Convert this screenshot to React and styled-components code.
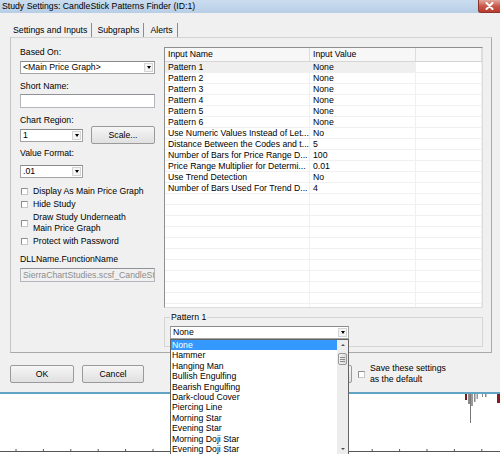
import React from 'react';
import styled, { createGlobalStyle } from 'styled-components';

const GlobalStyle = createGlobalStyle`
  html, body {
    margin: 0;
    padding: 0;
    background: #ffffff;
  }
  body {
    font-family: "Liberation Sans", Arial, sans-serif;
    font-size: 8.7px;
    color: #000;
  }
`;

const inputs = [
  ['Pattern 1', 'None'],
  ['Pattern 2', 'None'],
  ['Pattern 3', 'None'],
  ['Pattern 4', 'None'],
  ['Pattern 5', 'None'],
  ['Pattern 6', 'None'],
  ['Use Numeric Values Instead of Let...', 'No'],
  ['Distance Between the Codes and t...', '5'],
  ['Number of Bars for Price Range D...', '100'],
  ['Price Range Multiplier for Determi...', '0.01'],
  ['Use Trend Detection', 'No'],
  ['Number of Bars Used For Trend D...', '4'],
];

const patterns = [
  'None',
  'Hammer',
  'Hanging Man',
  'Bullish Engulfing',
  'Bearish Engulfing',
  'Dark-cloud Cover',
  'Piercing Line',
  'Morning Star',
  'Evening Star',
  'Morning Doji Star',
  'Evening Doji Star',
];

const Screen = styled.div`
  width: 500px;
  height: 454px;
  overflow: hidden;
  display: flex;
  flex-direction: column;
  background: #fff;
`;

const Dialog = styled.div`
  background: #f0f0f0;
  border-bottom: 2px solid #62a4c4;
  position: relative;
  z-index: 2;
`;

const TitleBar = styled.div`
  height: 13px;
  display: flex;
  align-items: center;
  justify-content: space-between;
  background: linear-gradient(#cadcef, #b8cee6);
`;

const Title = styled.span`
  padding-left: 2px;
  line-height: 13px;
  white-space: nowrap;
`;

const CloseButton = styled.div`
  width: 22px;
  height: 13px;
  align-self: flex-start;
  display: flex;
  align-items: center;
  justify-content: center;
  background: linear-gradient(#e2a79c, #c9594c 50%, #b83b2e);
  border: 1px solid #8e3329;
  border-top: none;
  border-right: none;
  border-radius: 0 0 0 3px;
  box-sizing: border-box;
`;

const DialogBody = styled.div`
  padding: 9px 8px 9px 10px;
`;

const TabStrip = styled.div`
  display: flex;
  align-items: flex-end;
  height: 15px;
`;

const Tab = styled.div`
  height: 14px;
  line-height: 14px;
  padding: 0 4px 0 3px;
  border-right: 1px solid #8c8c8c;
  margin-right: ${(p) => (p.$active ? '2px' : '3px')};
  white-space: nowrap;
`;

const TabPanel = styled.div`
  height: 316px;
  box-sizing: border-box;
  border: 1px solid #a9a9a9;
  border-top-color: #d4d4d4;
  border-left-color: #c4c4c4;
  padding: 9px 8px 5px 9px;
  display: grid;
  grid-template-columns: 135px 319px;
  column-gap: 9px;
`;

const LeftColumn = styled.div`
  display: flex;
  flex-direction: column;
`;

const Label = styled.div`
  line-height: 11px;
  height: 11px;
  margin-top: ${(p) => p.$gap || 0}px;
  white-space: nowrap;
`;

const Combo = styled.div`
  position: relative;
  width: ${(p) => p.$width}px;
  height: 13px;
  box-sizing: border-box;
  margin-top: ${(p) => p.$gap || 0}px;
  background: #fff;
  border: 1px solid #a3a3a3;
  border-top-color: #8a8a8a;
  display: flex;
  align-items: center;
  justify-content: space-between;
  padding-left: 2px;
`;

const ComboText = styled.span`
  line-height: 11px;
  white-space: nowrap;
`;

const ComboArrow = styled.span`
  width: 9px;
  height: 9px;
  margin-right: 1px;
  box-sizing: border-box;
  border: 1px solid #d4d4d4;
  background: #f4f4f4;
  display: flex;
  align-items: center;
  justify-content: center;
  &::after {
    content: '';
    border-left: 2.5px solid transparent;
    border-right: 2.5px solid transparent;
    border-top: 3px solid #000;
  }
`;

const TextBox = styled.div`
  height: 14px;
  box-sizing: border-box;
  margin-top: ${(p) => p.$gap || 0}px;
  border: 1px solid #b4b6bc;
  border-top-color: #8e9197;
  background: ${(p) => (p.$disabled ? '#f0f0f0' : '#fff')};
  color: #8d8d8d;
  line-height: 12px;
  padding-left: 2px;
  white-space: nowrap;
  overflow: hidden;
`;

const RegionRow = styled.div`
  display: flex;
  align-items: center;
  justify-content: space-between;
  height: 18px;
`;

const Button = styled.div`
  width: ${(p) => p.$width}px;
  height: 18px;
  box-sizing: border-box;
  margin-left: ${(p) => p.$gap || 0}px;
  border: 1px solid #9a9a9a;
  border-radius: 2px;
  background: linear-gradient(#f6f6f6, #ebebeb 50%, #e0e0e0);
  display: flex;
  align-items: center;
  justify-content: center;
  flex-shrink: 0;
`;

const CheckList = styled.div`
  display: flex;
  flex-direction: column;
  gap: 2px;
  margin-top: 8px;
`;

const CheckRow = styled.div`
  display: flex;
  align-items: center;
  gap: 5px;
  padding-left: 1px;
  margin-left: ${(p) => p.$gap || 0}px;
  line-height: 11px;
`;

const CheckBox = styled.span`
  width: 7px;
  height: 7px;
  box-sizing: border-box;
  border: 1px solid #8e8f8f;
  border-right-color: #c7c7c7;
  border-bottom-color: #c7c7c7;
  background: #fff;
  flex-shrink: 0;
`;

const RightColumn = styled.div`
  display: flex;
  flex-direction: column;
`;

const InputsTable = styled.div`
  height: 261px;
  box-sizing: border-box;
  border: 1px solid #dcdcdc;
  border-top-color: #8f8f8f;
  border-left-color: #8f8f8f;
  background: #fff;
  overflow: hidden;
`;

const HeaderRow = styled.div`
  display: grid;
  grid-template-columns: 145px 106px 1fr;
  height: 13px;
  background: #f7f7f7;
  border-bottom: 1px solid #d6d6d6;
`;

const HeaderCell = styled.div`
  line-height: 13px;
  padding-left: 3px;
  border-right: 1px solid #dcdcdc;
`;

const Row = styled.div`
  display: grid;
  grid-template-columns: 145px 106px 1fr;
  height: 11px;
  box-sizing: border-box;
  border-bottom: 1px solid #f0f0f0;
`;

const Cell = styled.div`
  line-height: 10px;
  padding-left: 3px;
  white-space: nowrap;
  overflow: hidden;
  border-right: 1px solid #f0f0f0;
  background: ${(p) => (p.$selected ? '#efefef' : 'transparent')};
`;

const GroupBox = styled.fieldset`
  margin: 4px 0 0;
  padding: 4px 5px 7px;
  border: 1px solid #d5d5d5;
  min-width: 0;
`;

const GroupLegend = styled.legend`
  padding: 0 1px;
  line-height: 10px;
`;

const ComboHolder = styled.div`
  position: relative;
  width: 179px;
`;

const DropList = styled.div`
  position: absolute;
  top: 100%;
  left: 0;
  width: 179px;
  height: 116px;
  box-sizing: border-box;
  border: 1px solid #646464;
  background: #fff;
  display: flex;
  z-index: 10;
`;

const DropItems = styled.div`
  flex: 1;
  overflow: hidden;
`;

const DropItem = styled.div`
  line-height: 10.4px;
  height: 10.4px;
  padding-left: 1px;
  white-space: nowrap;
  background: ${(p) => (p.$active ? '#3399ff' : 'transparent')};
  color: ${(p) => (p.$active ? '#fff' : '#000')};
`;

const ScrollBar = styled.div`
  width: 11px;
  background: #ededed;
  display: flex;
  flex-direction: column;
  justify-content: space-between;
  position: relative;
`;

const ScrollArrow = styled.div`
  height: 10px;
  display: flex;
  align-items: center;
  justify-content: center;
  &::after {
    content: '';
    border-left: 2px solid transparent;
    border-right: 2px solid transparent;
    ${(p) => (p.$up ? 'border-bottom: 2.5px solid #505050;' : 'border-top: 2.5px solid #505050;')}
  }
`;

const ScrollThumb = styled.div`
  position: absolute;
  top: 13px;
  left: 1px;
  width: 9px;
  height: 12px;
  box-sizing: border-box;
  border: 1px solid #9a9a9a;
  border-radius: 2px;
  background: linear-gradient(90deg, #f2f2f2, #dadada);
  display: flex;
  flex-direction: column;
  align-items: center;
  justify-content: center;
  gap: 1px;
  span {
    width: 5px;
    height: 1px;
    background: #8a8a8a;
  }
`;

const ButtonRow = styled.div`
  display: flex;
  align-items: center;
  height: 18px;
  margin-top: 12px;
`;

const SaveText = styled.div`
  line-height: 11px;
`;

const Chart = styled.div`
  flex: 1;
  background: #fff;
  position: relative;
  z-index: 1;
`;

function CloseIcon() {
  return (
    <svg width="9" height="8" viewBox="0 0 9 8">
      <path d="M1.5 1 L7.5 7 M7.5 1 L1.5 7" stroke="#fff" strokeWidth="2" strokeLinecap="round" />
    </svg>
  );
}

function ComboBox({ width, gap, children }) {
  return (
    <Combo $width={width} $gap={gap}>
      <ComboText>{children}</ComboText>
      <ComboArrow />
    </Combo>
  );
}

function ChartStrip() {
  const ticks = Array.from({ length: 18 }, (_, i) => 16 + i * 27.4);
  return (
    <svg width="500" height="58" viewBox="0 0 500 58">
      <rect x="465" y="0" width="2" height="6" fill="#7a1515" />
      <line x1="470.5" y1="0" x2="470.5" y2="29" stroke="#777" />
      <rect x="468" y="0" width="2" height="10" fill="#8a8a8a" />
      <rect x="471" y="0" width="2" height="12" fill="#9a9a9a" />
      <rect x="474" y="0" width="1.5" height="8" fill="#8a8a8a" />
      <rect x="476.5" y="0" width="1.5" height="5" fill="#9a9a9a" />
      <rect x="482" y="0" width="1" height="3" fill="#888" />
      <rect x="485" y="0" width="1.5" height="3" fill="#888" />
      <rect x="497" y="0" width="3" height="9" fill="#8a1a1a" />
      <line x1="0" y1="57.5" x2="500" y2="57.5" stroke="#555" />
      {ticks.map((x) => (
        <line key={x} x1={x} y1="55" x2={x} y2="58" stroke="#555" />
      ))}
    </svg>
  );
}

export default function App() {
  const emptyRows = Array.from({ length: 12 }, (_, i) => i);
  return (
    <>
      <GlobalStyle />
      <Screen>
        <Dialog>
          <TitleBar>
            <Title>Study Settings: CandleStick Patterns Finder (ID:1)</Title>
            <CloseButton>
              <CloseIcon />
            </CloseButton>
          </TitleBar>
          <DialogBody>
            <TabStrip>
              <Tab $active>Settings and Inputs</Tab>
              <Tab>Subgraphs</Tab>
              <Tab>Alerts</Tab>
            </TabStrip>
            <TabPanel>
              <LeftColumn>
                <Label>Based On:</Label>
                <ComboBox width={135} gap={3}>&lt;Main Price Graph&gt;</ComboBox>
                <Label $gap={7}>Short Name:</Label>
                <TextBox $gap={2} />
                <Label $gap={7}>Chart Region:</Label>
                <RegionRow>
                  <ComboBox width={63}>1</ComboBox>
                  <Button $width={64}>Scale...</Button>
                </RegionRow>
                <Label $gap={4}>Value Format:</Label>
                <ComboBox width={63} gap={6}>.01</ComboBox>
                <CheckList>
                  <CheckRow>
                    <CheckBox />
                    <span>Display As Main Price Graph</span>
                  </CheckRow>
                  <CheckRow>
                    <CheckBox />
                    <span>Hide Study</span>
                  </CheckRow>
                  <CheckRow>
                    <CheckBox />
                    <span>
                      Draw Study Underneath
                      <br />
                      Main Price Graph
                    </span>
                  </CheckRow>
                  <CheckRow>
                    <CheckBox />
                    <span>Protect with Password</span>
                  </CheckRow>
                </CheckList>
                <Label $gap={7}>DLLName.FunctionName</Label>
                <TextBox $gap={3} $disabled>
                  SierraChartStudies.scsf_CandleSt
                </TextBox>
              </LeftColumn>
              <RightColumn>
                <InputsTable>
                  <HeaderRow>
                    <HeaderCell>Input Name</HeaderCell>
                    <HeaderCell>Input Value</HeaderCell>
                    <HeaderCell />
                  </HeaderRow>
                  {inputs.map(([name, value], i) => (
                    <Row key={name}>
                      <Cell $selected={i === 0}>{name}</Cell>
                      <Cell $selected={i === 0}>{value}</Cell>
                      <Cell />
                    </Row>
                  ))}
                  {emptyRows.map((i) => (
                    <Row key={`empty-${i}`}>
                      <Cell />
                      <Cell />
                      <Cell />
                    </Row>
                  ))}
                </InputsTable>
                <GroupBox>
                  <GroupLegend>Pattern 1</GroupLegend>
                  <ComboHolder>
                    <ComboBox width={179}>None</ComboBox>
                    <DropList>
                      <DropItems>
                        {patterns.map((p, i) => (
                          <DropItem key={p} $active={i === 0}>
                            {p}
                          </DropItem>
                        ))}
                      </DropItems>
                      <ScrollBar>
                        <ScrollArrow $up />
                        <ScrollThumb>
                          <span />
                          <span />
                          <span />
                        </ScrollThumb>
                        <ScrollArrow />
                      </ScrollBar>
                    </DropList>
                  </ComboHolder>
                </GroupBox>
              </RightColumn>
            </TabPanel>
            <ButtonRow>
              <Button $width={64}>OK</Button>
              <Button $width={62} $gap={8}>Cancel</Button>
              <Button $width={62} $gap={146}>Apply</Button>
              <CheckRow $gap={5}>
                <CheckBox />
                <SaveText>
                  Save these settings
                  <br />
                  as the default
                </SaveText>
              </CheckRow>
            </ButtonRow>
          </DialogBody>
        </Dialog>
        <Chart>
          <ChartStrip />
        </Chart>
      </Screen>
    </>
  );
}
